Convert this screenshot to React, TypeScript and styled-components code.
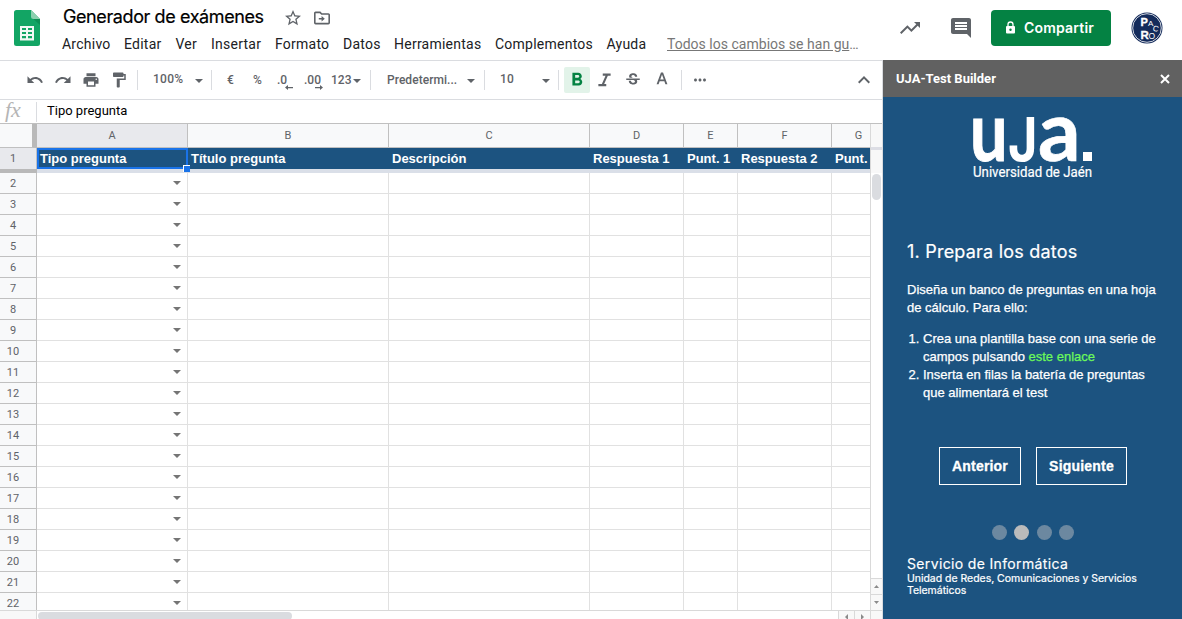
import React from "react";
import styled, { createGlobalStyle } from "styled-components";

const GlobalStyle = createGlobalStyle`
  * { box-sizing: border-box; }
  body { margin: 0; background: #fff; font-family: Roboto, "Liberation Sans", sans-serif; overflow: hidden; }
  button { font: inherit; border: 0; background: none; padding: 0; margin: 0; }
`;

const Page = styled.div`
  width: 1182px;
  height: 619px;
  display: flex;
  flex-direction: column;
  overflow: hidden;
`;

const Header = styled.header`
  height: 60px;
  flex: none;
  display: flex;
  align-items: flex-start;
  padding-left: 14px;
`;

const DocLogo = styled.svg`
  width: 26px;
  height: 36px;
  margin-top: 10px;
  flex: none;
`;

const DocInfo = styled.div`
  margin-left: 22px;
  width: 815px;
  flex: none;
`;

const TitleRow = styled.div`
  display: flex;
  height: 34px;
  align-items: center;
`;

const DocTitle = styled.h1`
  margin: 0 20px 0 1px;
  width: 202px;
  white-space: nowrap;
  font: 400 18px/24px Inter, sans-serif;
  letter-spacing: -0.4px;
  color: #000;
  -webkit-text-stroke: 0.2px #000;
`;

const TitleIcon = styled.svg`
  width: 16px;
  height: 16px;
  margin: 2px 13px 0 0;
  fill: #5f6368;
`;

const MenuBar = styled.nav`
  display: flex;
  height: 20px;
  align-items: center;
  white-space: nowrap;
  font-size: 14px;
  line-height: 20px;
  color: #202124;
`;

const MenuItem = styled.span<{ $w: number }>`
  width: ${(p) => p.$w}px;
  letter-spacing: 0.24px;
  flex: none;
`;

const SaveState = styled.a`
  width: 196px;
  overflow: hidden;
  text-overflow: ellipsis;
  color: #777;
  text-decoration: underline;
  letter-spacing: 0.02px;
`;

const HeaderIcon = styled.svg<{ $ml: number; $size: number; $mt: number }>`
  width: ${(p) => p.$size}px;
  height: ${(p) => p.$size}px;
  margin: ${(p) => p.$mt}px 0 0 ${(p) => p.$ml}px;
  fill: #5f6368;
  flex: none;
`;

const ShareButton = styled.button`
  width: 120px;
  height: 36px;
  margin: 10px 0 0 18px;
  border-radius: 4px;
  background: #048243;
  color: #fff;
  display: flex;
  align-items: center;
  padding-left: 14px;
  gap: 8px;
  font: 600 14px/20px Inter, sans-serif;
  letter-spacing: 0.2px;
  flex: none;
  svg { width: 11px; height: 14px; }
`;

const Avatar = styled.svg`
  width: 32px;
  height: 32px;
  margin: 12px 0 0 20px;
  flex: none;
`;

const Main = styled.div`
  display: flex;
  flex: 1;
  min-height: 0;
`;

const Editor = styled.section`
  width: 883px;
  flex: none;
  display: flex;
  flex-direction: column;
  border-top: 1px solid #dadce0;
  border-right: 1px solid #dadce0;
`;

const Toolbar = styled.div`
  height: 39px;
  flex: none;
  display: flex;
  align-items: center;
  border-bottom: 1px solid #dadce0;
  padding-left: 26px;
  color: #5f6368;
`;

const Tool = styled.div<{ $w: number; $icon?: number; $up?: number; $active?: boolean }>`
  width: ${(p) => p.$w}px;
  height: 26px;
  flex: none;
  display: flex;
  align-items: center;
  justify-content: center;
  padding-bottom: ${(p) => p.$up ?? 0}px;
  border-radius: 2px;
  background: ${(p) => (p.$active ? "#e2f3e9" : "transparent")};
  fill: ${(p) => (p.$active ? "#048243" : "#5f6368")};
  svg {
    width: ${(p) => p.$icon ?? 18}px;
    height: ${(p) => p.$icon ?? 18}px;
    flex: none;
    overflow: visible;
  }
`;

const ToolLabel = styled.div<{ $w: number; $pl?: number; $dy?: number; $ls?: number }>`
  width: ${(p) => p.$w}px;
  padding-left: ${(p) => p.$pl ?? 0}px;
  padding-bottom: ${(p) => p.$dy ?? 0}px;
  letter-spacing: ${(p) => p.$ls ?? 0.3}px;
  flex: none;
  white-space: nowrap;
  font-size: 12px;
  line-height: 18px;
  font-weight: 500;
`;

const Separator = styled.i<{ $ml?: number; $mr?: number }>`
  width: 1px;
  height: 20px;
  flex: none;
  background: #dadce0;
  margin: 0 ${(p) => p.$mr ?? 0}px 0 ${(p) => p.$ml ?? 0}px;
`;

const Caret = styled.i<{ $mr?: number }>`
  width: 0;
  height: 0;
  flex: none;
  border: 4px solid transparent;
  border-top-color: #5f6368;
  border-bottom: 0;
  margin: 1px ${(p) => p.$mr ?? 0}px 0 0;
`;

const FormulaBar = styled.div`
  height: 24px;
  flex: none;
  display: flex;
  align-items: center;
  border-bottom: 1px solid #c0c0c0;
  font-size: 13px;
  color: #000;
`;

const Fx = styled.span`
  width: 36px;
  padding: 0 0 3px 5px;
  font: italic 22px/20px "Liberation Serif", serif;
  color: #b5b5b5;
`;

const FormulaText = styled.span`
  margin-left: 10px;
  line-height: 20px;
  padding-bottom: 2px;
`;

const SheetArea = styled.div`
  display: flex;
  flex: 1;
  min-height: 0;
`;

const Grid = styled.div`
  width: 871px;
  flex: none;
  display: flex;
  flex-direction: column;
  border-right: 1px solid #d9d9d9;
  overflow: hidden;
`;

const Rows = styled.div`
  height: 437px;
  flex: none;
  overflow: hidden;
`;

const Row = styled.div`
  display: flex;
  flex: none;
  height: 21px;
`;

const ColumnHeads = styled.div`
  display: flex;
  height: 24px;
  flex: none;
`;

const Corner = styled.div`
  width: 37px;
  flex: none;
  background: #f8f9fa;
  border-right: 5px solid #b9b9b9;
  border-bottom: 1px solid #c0c0c0;
`;

const ColumnHead = styled.div<{ $w: number; $active?: boolean }>`
  width: ${(p) => p.$w}px;
  flex: none;
  text-align: center;
  font-size: 11px;
  line-height: 23px;
  color: #5f6368;
  background: ${(p) => (p.$active ? "#e8e9ed" : "#f8f9fa")};
  border-right: 1px solid #c0c0c0;
  border-bottom: 1px solid #c0c0c0;
`;

const RowHead = styled.div<{ $first?: boolean }>`
  width: 37px;
  flex: none;
  padding-right: 10px;
  text-align: center;
  font-size: 11px;
  line-height: 21px;
  color: #5f6368;
  background: ${(p) => (p.$first ? "#e8e9ed" : "#f8f9fa")};
  border-right: 1px solid #c0c0c0;
  border-bottom: ${(p) => (p.$first ? 0 : 1)}px solid #c0c0c0;
`;

const HeadCell = styled.div<{ $w: number; $selected?: boolean }>`
  width: ${(p) => p.$w}px;
  flex: none;
  position: relative;
  padding-left: 3px;
  overflow: ${(p) => (p.$selected ? "visible" : "hidden")};
  background: #1c5380;
  color: #fff;
  white-space: nowrap;
  font: 700 13px/21px "Liberation Sans", sans-serif;
  box-shadow: ${(p) => (p.$selected ? "inset 0 0 0 2px #1a73e8" : "none")};
`;

const FillHandle = styled.i`
  position: absolute;
  right: -2px;
  bottom: -3px;
  width: 7px;
  height: 7px;
  background: #1a73e8;
  border: solid #fff;
  border-width: 1px 0 0 1px;
  z-index: 1;
`;

const FreezeBar = styled.div`
  height: 4px;
  flex: none;
  background: linear-gradient(to right, #b9b9b9 37px, #dadfe8 37px);
`;

const Cell = styled.div<{ $w: number }>`
  width: ${(p) => p.$w}px;
  flex: none;
  display: flex;
  align-items: center;
  justify-content: flex-end;
  border: solid #e1e1e1;
  border-width: 0 1px 1px 0;
`;

const CellCaret = styled.i`
  border: 4px solid transparent;
  border-top: 4px solid #757575;
  border-bottom: 0;
  margin: 0 6px 0 0;
`;

const HScroll = styled.div`
  flex: 1;
  display: flex;
  border-top: 1px solid #d9d9d9;
`;

const HScrollCorner = styled.div`
  width: 37px;
  background: #f8f8f8;
  border-right: 1px solid #d9d9d9;
`;

const HThumb = styled.div`
  width: 254px;
  height: 8px;
  margin: 1px auto 0 1px;
  border-radius: 4px;
  background: #dadce0;
`;

const ArrowBox = styled.div<{ $w: number; $h: number }>`
  width: ${(p) => p.$w}px;
  height: ${(p) => p.$h}px;
  flex: none;
  display: flex;
  align-items: center;
  justify-content: center;
  background: #f8f8f8;
  border: solid #d9d9d9;
  border-width: ${(p) => (p.$w > 12 ? "0 0 0 1px" : "1px 0 0 0")};
  svg { width: 5px; height: 5px; fill: #8a8a8a; overflow: visible; }
`;

const VScroll = styled.div`
  flex: 1;
  display: flex;
  flex-direction: column;
`;

const VScrollHead = styled.div`
  height: 26px;
  flex: none;
  background: #f8f8f8;
  border-bottom: 3px solid #dcdde4;
`;

const VScrollFrozen = styled.div`
  height: 23px;
  flex: none;
  background: #f8f8f8;
`;

const VThumb = styled.div`
  width: 9px;
  height: 26px;
  margin: 1px auto auto 1px;
  flex: none;
  border-radius: 5px;
  background: #dadce0;
`;

const Sidebar = styled.aside`
  flex: 1;
  display: flex;
  flex-direction: column;
  background: #1c5380;
  color: #fff;
`;

const SidebarHeader = styled.div`
  height: 37px;
  flex: none;
  display: flex;
  align-items: center;
  justify-content: space-between;
  padding: 0 12px 0 13px;
  background: #616161;
  font-size: 13px;
  font-weight: 700;
  svg { width: 10px; height: 10px; stroke: #fff; stroke-width: 2; }
`;

const SidebarBody = styled.div`
  flex: 1;
  padding: 17px 23px 0 24px;
  display: flex;
  flex-direction: column;
  font: 400 13px/18px "Liberation Sans", sans-serif;
  white-space: nowrap;
`;

const UjaLogo = styled.svg`
  width: 124px;
  height: 70px;
  margin-left: 64px;
  flex: none;
`;

const StepTitle = styled.h2`
  margin: 56px 0 0;
  font: 400 18px/24px Inter, sans-serif;
  letter-spacing: 0.22px;
  -webkit-text-stroke: 0.2px #fff;
`;

const Intro = styled.p`
  margin: 17px 0 0;
  -webkit-text-stroke: 0.25px #fff;
`;

const Steps = styled.ol`
  margin: 13px 0 0;
  padding: 0 0 0 16px;
  -webkit-text-stroke: 0.25px;
`;

const Link = styled.a`
  color: #6cf95a;
`;

const Buttons = styled.div`
  display: flex;
  gap: 15px;
  margin: 45px 0 0 32px;
`;

const NavButton = styled.button<{ $w: number }>`
  width: ${(p) => p.$w}px;
  height: 38px;
  border: 1px solid #fff;
  color: #fff;
  font: 700 14px/20px "Liberation Sans", sans-serif;
  letter-spacing: 0.2px;
  -webkit-text-stroke: 0.3px #fff;
`;

const Dots = styled.div`
  display: flex;
  gap: 7.3px;
  margin: 40px 0 0 85px;
`;

const Dot = styled.i<{ $on?: boolean }>`
  width: 15px;
  height: 15px;
  border-radius: 50%;
  background: ${(p) => (p.$on ? "#bbb" : "#6c88a0")};
`;

const Service = styled.div`
  margin-top: 15px;
  font: 400 14px/18px Inter, sans-serif;
  letter-spacing: 0.35px;
  -webkit-text-stroke: 0.15px #fff;
`;

const Unit = styled.div`
  font: 400 10.5px/12px Inter, sans-serif;
  letter-spacing: -0.03px;
  -webkit-text-stroke: 0.2px #fff;
`;

const menu: [string, number][] = [
  ["Archivo", 62], ["Editar", 51.5], ["Ver", 35.5], ["Insertar", 64], ["Formato", 68],
  ["Datos", 51], ["Herramientas", 101], ["Complementos", 111.5], ["Ayuda", 60.5],
];

const columns: [string, number, string][] = [
  ["A", 151, "Tipo pregunta"], ["B", 201, "Título pregunta"], ["C", 201, "Descripción"],
  ["D", 94, "Respuesta 1"], ["E", 54, "Punt. 1"], ["F", 94, "Respuesta 2"], ["G", 54, "Punt. 2"],
];

const rowNumbers = Array.from({ length: 21 }, (_, i) => i + 2);

const Icon = ({ d }: { d: string }) => (
  <svg viewBox="0 0 24 24"><path d={d} /></svg>
);

export default function App() {
  return (
    <Page>
      <GlobalStyle />
      <Header>
        <DocLogo viewBox="0 0 26 36">
          <path d="M2.500 0H17l9 9v24.500a2.500 2.500 0 0 1-2.500 2.500h-21A2.500 2.500 0 0 1 0 33.500v-31A2.500 2.500 0 0 1 2.500 0z" fill="#12a564" />
          <path d="M17 0l9 9h-6.500A2.500 2.500 0 0 1 17 6.500z" fill="#8bd0ae" />
          <path d="M19.500 9H26v6z" fill="#0c8f54" />
          <path fillRule="evenodd" fill="#f1f8f4" d="M6 16h14v14.500H6zM8 18v2h4v-2zm6 0v2h4v-2zm-6 4v2h4v-2zm6 0v2h4v-2zm-6 4v2.300h4V26zm6 0v2.300h4V26z" />
        </DocLogo>
        <DocInfo>
          <TitleRow>
            <DocTitle>Generador de exámenes</DocTitle>
            <TitleIcon viewBox="2 2 20 20">
              <path d="M22 9.240l-7.190-.62L12 2 9.190 8.630 2 9.240l5.460 4.730L5.820 21 12 17.270 18.180 21l-1.630-7.030L22 9.240zM12 15.400l-3.760 2.270 1-4.280-3.320-2.880 4.380-.38L12 6.100l1.710 4.040 4.380.38-3.320 2.880 1 4.280L12 15.400z" />
            </TitleIcon>
            <TitleIcon viewBox="2 2 20 20">
              <path d="M20 6h-8l-2-2H4c-1.100 0-2 .9-2 2v12c0 1.100.9 2 2 2h16c1.100 0 2-.9 2-2V8c0-1.100-.9-2-2-2zm0 12H4V6h5.170l2 2H20v10zm-8.500-1.500L15.500 13l-4-3.500v2.500H8v2h3.500z" />
            </TitleIcon>
          </TitleRow>
          <MenuBar>
            {menu.map(([label, w]) => <MenuItem key={label} $w={w}>{label}</MenuItem>)}
            <SaveState>Todos los cambios se han guardado</SaveState>
          </MenuBar>
        </DocInfo>
        <HeaderIcon viewBox="0 0 24 24" $ml={21} $mt={16} $size={24}>
          <path d="M16 6l2.290 2.290-4.880 4.880-4-4L2 16.590 3.410 18l6-6 4 4 6.300-6.290L22 12V6z" />
        </HeaderIcon>
        <HeaderIcon viewBox="0 0 24 24" $ml={27} $mt={16} $size={24}>
          <path d="M21.990 4c0-1.100-.89-2-1.990-2H4c-1.100 0-2 .9-2 2v12c0 1.100.9 2 2 2h14l4 4-.01-18zM18 14H6v-2h12v2zm0-3H6V9h12v2zm0-3H6V6h12v2z" />
        </HeaderIcon>
        <ShareButton>
          <svg viewBox="0 0 11 14">
            <path d="M3 5V3.500a2.500 2.500 0 0 1 5 0V5" fill="none" stroke="#fff" strokeWidth="1.300" />
            <rect x="1" y="5" width="9" height="7.500" rx="1" fill="#fff" />
            <circle cx="5.500" cy="8.700" r="1.200" fill="#048243" />
          </svg>
          Compartir
        </ShareButton>
        <Avatar viewBox="0 0 32 32">
          <circle cx="16" cy="16" r="15.500" fill="#142b5b" />
          <circle cx="16" cy="16" r="14.300" fill="none" stroke="#fff" strokeWidth="0.800" />
          <g fill="#fff" fontFamily="Liberation Sans, sans-serif">
            <text x="9.500" y="13.500" fontSize="11" fontWeight="700" stroke="#fff" strokeWidth="0.300">P</text>
            <text x="17" y="14" fontSize="8">A</text>
            <text x="22" y="19" fontSize="8" transform="rotate(15 24 16)">C</text>
            <text x="9.500" y="27" fontSize="11.500" fontWeight="700" stroke="#fff" strokeWidth="0.300">R</text>
            <text x="17.500" y="26.500" fontSize="8.500">O</text>
          </g>
        </Avatar>
      </Header>
      <Main>
        <Editor>
          <Toolbar>
            <Tool $w={18}><Icon d="M12.500 8c-2.650 0-5.050.99-6.900 2.600L2 7v9h9l-3.620-3.620c1.390-1.160 3.160-1.880 5.120-1.880 3.540 0 6.550 2.310 7.600 5.500l2.370-.78C21.080 11.030 17.150 8 12.500 8z" /></Tool>
            <Tool $w={38}><Icon d="M18.400 10.600C16.550 8.990 14.150 8 11.500 8c-4.650 0-8.580 3.030-9.960 7.220L3.900 16c1.050-3.190 4.050-5.500 7.600-5.500 1.950 0 3.730.72 5.120 1.880L13 16h9V7l-3.600 3.600z" /></Tool>
            <Tool $w={18}><Icon d="M19 8H5c-1.660 0-3 1.340-3 3v6h4v4h12v-4h4v-6c0-1.660-1.340-3-3-3zm-3 11H8v-5h8v5zm3-7c-.55 0-1-.45-1-1s.45-1 1-1 1 .45 1 1-.45 1-1 1zm-1-9H6v4h12V3z" /></Tool>
            <Tool $w={37}><Icon d="M18 4V3c0-.55-.45-1-1-1H5c-.55 0-1 .45-1 1v4c0 .55.45 1 1 1h12c.55 0 1-.45 1-1V6h1v4H9v11c0 .55.45 1 1 1h2c.55 0 1-.45 1-1v-9h8V4h-3z" /></Tool>
            <Separator />
            <ToolLabel $w={57} $pl={15} $dy={2}>100%</ToolLabel>
            <Caret $mr={8} />
            <Separator />
            <ToolLabel $w={41} $pl={15}>€</ToolLabel>
            <ToolLabel $w={24}>%</ToolLabel>
            <Tool $w={18}>
              <svg viewBox="0 0 18 18"><text x="0" y="13" fontSize="12" fontWeight="500">.0</text><path d="M8 16.500l3-2.500v2h5v1.300h-5v1.700z" /></svg>
            </Tool>
            <Tool $w={36}>
              <svg viewBox="0 0 18 18"><text x="0" y="13" fontSize="12" fontWeight="500">.00</text><path d="M19 16.500l-3-2.500v2h-5v1.300h5v1.700z" /></svg>
            </Tool>
            <ToolLabel $w={22} $ls={0}>123</ToolLabel>
            <Caret $mr={9} />
            <Separator />
            <ToolLabel $w={96} $pl={16} $ls={0.05}>Predetermi...</ToolLabel>
            <Caret $mr={9} />
            <Separator />
            <ToolLabel $w={57} $pl={15} $dy={2}>10</ToolLabel>
            <Caret $mr={8} />
            <Separator $mr={5} />
            <Tool $w={26} $icon={22} $active><Icon d="M15.600 10.790c.97-.67 1.650-1.770 1.650-2.790 0-2.260-1.750-4-4-4H7v14h7.040c2.090 0 3.710-1.700 3.710-3.790 0-1.520-.86-2.820-2.150-3.420zM10 6.500h3c.83 0 1.500.67 1.500 1.500s-.67 1.500-1.500 1.500h-3v-3zm3.500 9H10v-3h3.500c.83 0 1.500.67 1.500 1.500s-.67 1.500-1.500 1.500z" /></Tool>
            <Tool $w={29} $icon={21}><Icon d="M10 4v2.500h3.200L9 16H5v2.500h9V16h-2.400l4.200-9.500H19V4z" /></Tool>
            <Tool $w={28}><Icon d="M7.240 8.750c-.26-.48-.39-1.030-.39-1.670 0-.61.13-1.160.4-1.670.26-.5.63-.93 1.110-1.290.48-.35 1.050-.63 1.700-.83.66-.19 1.390-.29 2.180-.29.81 0 1.540.11 2.210.34.66.22 1.230.54 1.690.94.47.4.83.88 1.080 1.430.25.55.38 1.150.38 1.810h-3.010c0-.31-.05-.59-.15-.85-.09-.27-.24-.49-.44-.68-.2-.19-.45-.33-.75-.44-.3-.1-.66-.16-1.060-.16-.39 0-.74.04-1.030.13-.29.09-.53.21-.72.36-.19.16-.34.34-.44.55-.1.210-.15.430-.15.660 0 .48.25.88.74 1.210.38.25.77.48 1.410.7H7.390c-.05-.08-.11-.17-.15-.25zM21 12v-2H3v2h9.620c.18.07.4.14.55.2.37.17.66.34.87.51.21.17.35.36.43.57.07.2.11.43.11.69 0 .23-.05.45-.14.66-.09.2-.23.38-.42.53-.19.15-.42.26-.71.35-.29.08-.63.13-1.010.13-.43 0-.83-.04-1.180-.13s-.66-.23-.91-.42c-.25-.19-.45-.44-.59-.75-.14-.31-.25-.76-.25-1.210H6.400c0 .55.08 1.130.24 1.580.16.45.37.85.65 1.210.28.350.6.660.98.920.37.26.78.48 1.220.65.44.17.9.3 1.380.39.48.08.96.13 1.440.13.8 0 1.530-.09 2.180-.28s1.210-.45 1.670-.79c.46-.34.82-.77 1.070-1.270s.38-1.070.38-1.710c0-.6-.1-1.140-.31-1.610-.05-.11-.11-.23-.17-.33H21z" /></Tool>
            <Tool $w={30} $icon={20} $up={1}><Icon d="M5.490 17h2.420l1.270-3.580h5.650L16.090 17h2.420L13.250 3h-2.500L5.490 17zm4.420-5.610l2.030-5.790h.12l2.030 5.790H9.910z" /></Tool>
            <Separator $ml={4} $mr={9} />
            <Tool $w={18}><Icon d="M6 10c-1.100 0-2 .9-2 2s.9 2 2 2 2-.9 2-2-.9-2-2-2zm12 0c-1.100 0-2 .9-2 2s.9 2 2 2 2-.9 2-2-.9-2-2-2zm-6 0c-1.100 0-2 .9-2 2s.9 2 2 2 2-.9 2-2-.9-2-2-2z" /></Tool>
            <Tool $w={310} $icon={24}><Icon d="M12 8l-6 6 1.410 1.410L12 10.830l4.590 4.580L18 14z" /></Tool>
          </Toolbar>
          <FormulaBar>
            <Fx>fx</Fx>
            <Separator />
            <FormulaText>Tipo pregunta</FormulaText>
          </FormulaBar>
          <SheetArea>
            <Grid>
              <ColumnHeads>
                <Corner />
                {columns.map(([name, w]) => (
                  <ColumnHead key={name} $w={w} $active={name === "A"}>{name}</ColumnHead>
                ))}
              </ColumnHeads>
              <Row>
                <RowHead $first>1</RowHead>
                {columns.map(([name, w, title]) => (
                  <HeadCell key={name} $w={w} $selected={name === "A"}>
                    {title}
                    {name === "A" && <FillHandle />}
                  </HeadCell>
                ))}
              </Row>
              <FreezeBar />
              <Rows>
                {rowNumbers.map((n) => (
                  <Row key={n}>
                    <RowHead>{n}</RowHead>
                    {columns.map(([name, w]) => (
                      <Cell key={name} $w={w}>{name === "A" && <CellCaret />}</Cell>
                    ))}
                  </Row>
                ))}
              </Rows>
              <HScroll>
                <HScrollCorner />
                <HThumb />
                <ArrowBox $w={16} $h={10}><svg viewBox="0 0 5 5"><path d="M4 0v6L1 3z" /></svg></ArrowBox>
                <ArrowBox $w={16} $h={10}><svg viewBox="0 0 5 5"><path d="M1 0v6l3-3z" /></svg></ArrowBox>
              </HScroll>
            </Grid>
            <VScroll>
              <VScrollHead />
              <VScrollFrozen />
              <VThumb />
              <ArrowBox $w={11} $h={16}><svg viewBox="0 0 5 5"><path d="M0 4h5L2.500 1z" /></svg></ArrowBox>
              <ArrowBox $w={11} $h={16}><svg viewBox="0 0 5 5"><path d="M0 1h5L2.500 4z" /></svg></ArrowBox>
              <ArrowBox $w={11} $h={9} />
            </VScroll>
          </SheetArea>
        </Editor>
        <Sidebar>
          <SidebarHeader>
            UJA-Test Builder
            <svg viewBox="0 0 10 10"><path d="M1 1l8 8M9 1L1 9" /></svg>
          </SidebarHeader>
          <SidebarBody>
            <UjaLogo viewBox="0 0 124 70">
              <g fill="#fff" fontFamily="Lato, sans-serif" fontWeight="700">
                <text transform="translate(-1 46.500) scale(0.800 1)" fontSize="83" stroke="#fff" strokeWidth="1">u</text>
                <text transform="translate(37 46.500) scale(0.840 1)" fontSize="60" fontFamily="Inter, sans-serif">J</text>
                <text x="67" y="46.500" fontSize="84" stroke="#fff" strokeWidth="0.600">a</text>
                <rect x="112" y="38" width="9" height="9" />
                <text x="2" y="63" fontSize="14.500" fontWeight="400" fontFamily="Roboto, sans-serif" textLength="119" lengthAdjust="spacingAndGlyphs" stroke="#fff" strokeWidth="0.200">Universidad de Jaén</text>
              </g>
            </UjaLogo>
            <StepTitle>1. Prepara los datos</StepTitle>
            <Intro>Diseña un banco de preguntas en una hoja<br />de cálculo. Para ello:</Intro>
            <Steps>
              <li>Crea una plantilla base con una serie de<br />campos pulsando <Link>este enlace</Link></li>
              <li>Inserta en filas la batería de preguntas<br />que alimentará el test</li>
            </Steps>
            <Buttons>
              <NavButton $w={82}>Anterior</NavButton>
              <NavButton $w={91}>Siguiente</NavButton>
            </Buttons>
            <Dots><Dot /><Dot $on /><Dot /><Dot /></Dots>
            <Service>Servicio de Informática</Service>
            <Unit>Unidad de Redes, Comunicaciones y Servicios<br />Telemáticos</Unit>
          </SidebarBody>
        </Sidebar>
      </Main>
    </Page>
  );
}
